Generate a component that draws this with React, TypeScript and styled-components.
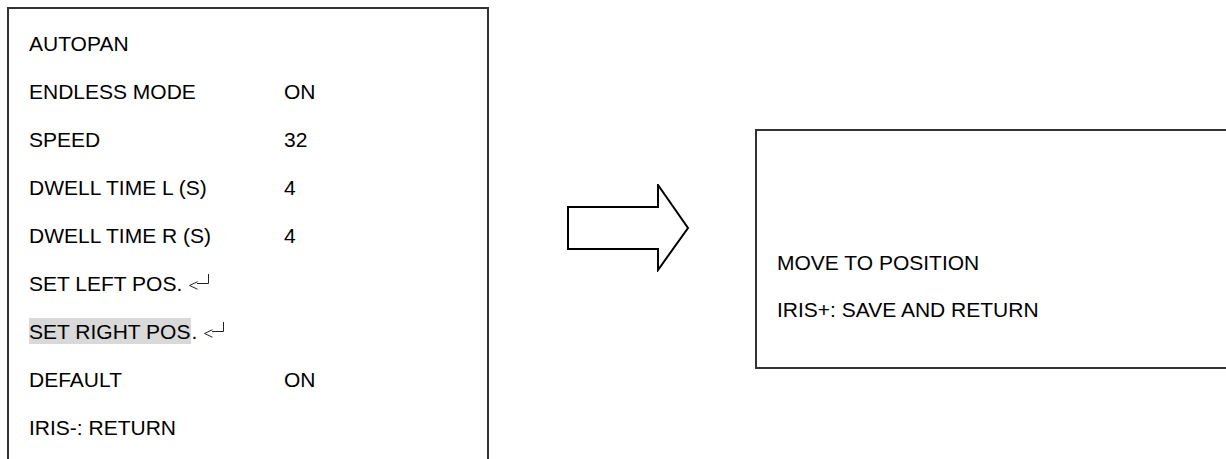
import React from 'react';
import styled, { createGlobalStyle } from 'styled-components';

const GlobalStyle = createGlobalStyle`
  html, body {
    margin: 0;
    padding: 0;
    background: #ffffff;
    overflow: hidden;
  }
  body {
    font-family: "Liberation Sans", Arial, sans-serif;
    color: #000;
  }
`;

const Page = styled.div`
  display: flex;
  align-items: flex-start;
  padding: 7px 0 0 7px;
  width: 1226px;
  height: 459px;
  box-sizing: border-box;
  overflow: hidden;
`;

const MenuPanel = styled.div`
  flex-shrink: 0;
  width: 482px;
  height: 480px;
  box-sizing: border-box;
  border: 2px solid #333;
  border-bottom: none;
  padding: 11px 0 0 20px;
`;

const MenuRow = styled.div`
  display: grid;
  grid-template-columns: 255px auto;
  height: 48px;
  line-height: 48px;
  font-size: 21px;
  white-space: nowrap;
`;

const Highlight = styled.span`
  background: #d9d9d9;
  padding: 2px 1px 1px 0;
`;

const EnterIcon = styled.svg`
  margin-left: 7px;
  vertical-align: 0;
`;

const ArrowWrap = styled.div`
  flex-shrink: 0;
  margin: 177px 0 0 77px;
  width: 124px;
  height: 88px;
`;

const PromptPanel = styled.div`
  flex-shrink: 0;
  margin: 122px 0 0 65px;
  width: 490px;
  height: 240px;
  box-sizing: border-box;
  border: 2px solid #333;
  padding: 108px 0 0 20px;
`;

const PromptLine = styled.div`
  height: 47px;
  line-height: 47px;
  font-size: 21px;
  white-space: nowrap;
`;

const Enter = () => (
  <EnterIcon width="20" height="17" viewBox="0 0 20 17">
    <polyline points="8.5,7.7 0.5,11.5 8.5,15.2" fill="none" stroke="#222" strokeWidth="1" />
    <polyline points="8,9.5 19.5,9.5 19.5,0" fill="none" stroke="#222" strokeWidth="1" />
  </EnterIcon>
);

interface Item {
  label: React.ReactNode;
  value?: string;
}

const items: Item[] = [
  { label: 'AUTOPAN' },
  { label: 'ENDLESS MODE', value: 'ON' },
  { label: 'SPEED', value: '32' },
  { label: 'DWELL TIME L (S)', value: '4' },
  { label: 'DWELL TIME R (S)', value: '4' },
  {
    label: (
      <>
        SET LEFT POS.
        <Enter />
      </>
    ),
  },
  {
    label: (
      <>
        <Highlight>SET RIGHT POS</Highlight>.
        <Enter />
      </>
    ),
  },
  { label: 'DEFAULT', value: 'ON' },
  { label: 'IRIS-: RETURN' },
];

export default function App() {
  return (
    <>
      <GlobalStyle />
      <Page>
        <MenuPanel>
          {items.map((item, idx) => (
            <MenuRow key={idx}>
              <span>{item.label}</span>
              <span>{item.value ?? ''}</span>
            </MenuRow>
          ))}
        </MenuPanel>

        <ArrowWrap>
          <svg width="124" height="88" viewBox="0 0 124 88">
            <polygon
              points="2,23 92,23 92,1 122,44 92,86 92,65 2,65"
              fill="#fff"
              stroke="#000"
              strokeWidth="2"
              strokeLinejoin="miter"
            />
          </svg>
        </ArrowWrap>

        <PromptPanel>
          <PromptLine>MOVE TO POSITION</PromptLine>
          <PromptLine>IRIS+: SAVE AND RETURN</PromptLine>
        </PromptPanel>
      </Page>
    </>
  );
}
